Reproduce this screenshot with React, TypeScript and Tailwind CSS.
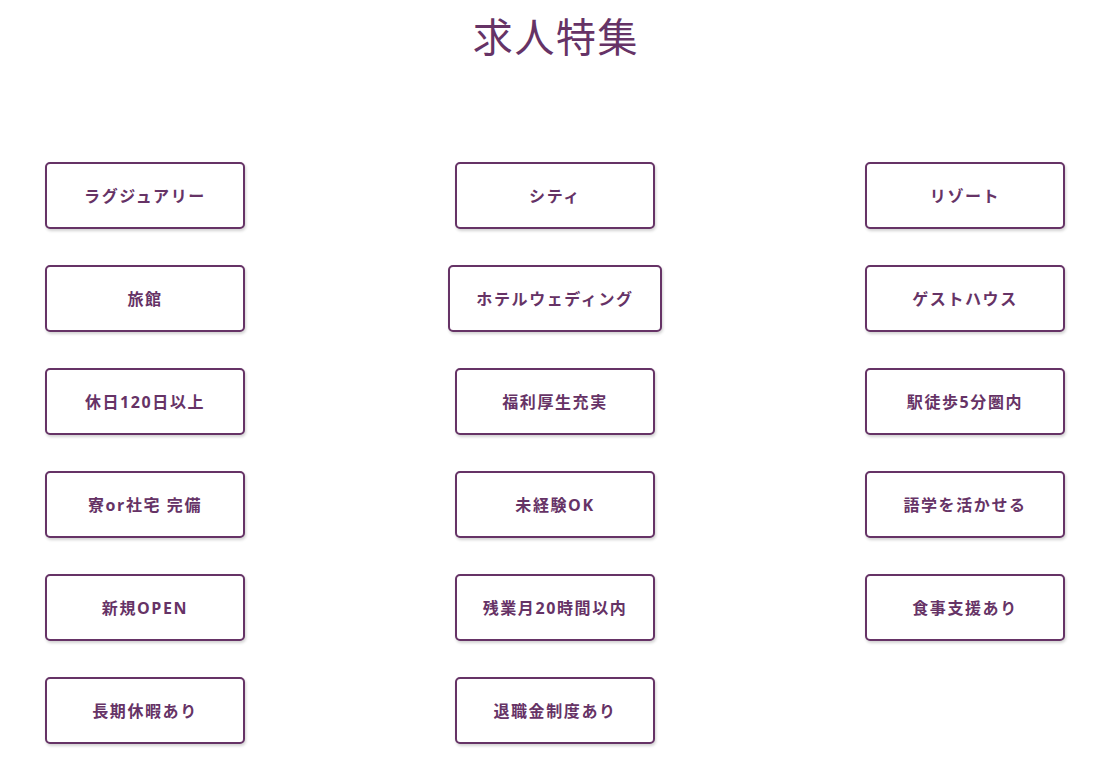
import React from 'react';

// 特集カテゴリ（3列で並べる）
const features: string[] = [
  'ラグジュアリー',
  'シティ',
  'リゾート',
  '旅館',
  'ホテルウェディング',
  'ゲストハウス',
  '休日120日以上',
  '福利厚生充実',
  '駅徒歩5分圏内',
  '寮or社宅 完備',
  '未経験OK',
  '語学を活かせる',
  '新規OPEN',
  '残業月20時間以内',
  '食事支援あり',
  '長期休暇あり',
  '退職金制度あり',
];

const alignByColumn = ['justify-self-start', 'justify-self-center', 'justify-self-end'];

export default function App() {
  return (
    <div
      className="min-h-screen bg-white text-[#663366]"
      style={{ fontFamily: "'Open Sans', 'Noto Sans CJK JP', sans-serif" }}
    >
      <div className="mx-[45px] w-[1020px] pb-10">
        <h1 className="pt-[9px] pl-[2px] text-center text-[40px] leading-[56px] font-normal tracking-[0.04em]">
          求人特集
        </h1>

        <div className="mt-[97px] grid grid-cols-3 gap-y-[36px]">
          {features.map((label, i) => (
            <a
              key={label}
              href="#"
              className={`${alignByColumn[i % 3]} flex h-[67px] min-w-[200px] items-center justify-center rounded-[5px] border-2 border-[#663366] bg-white px-[26px] pt-[1px] text-[16px] font-bold tracking-[0.1em] shadow-[1px_2px_3px_rgba(0,0,0,0.18)]`}
            >
              {label}
            </a>
          ))}
        </div>
      </div>
    </div>
  );
}
